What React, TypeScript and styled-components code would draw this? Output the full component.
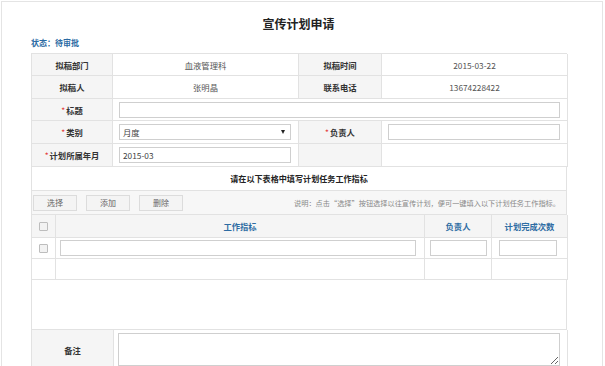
import React from 'react';
import styled, { createGlobalStyle, css } from 'styled-components';

const GlobalStyle = createGlobalStyle`
  html, body {
    margin: 0;
    padding: 0;
    background: #ffffff;
    overflow: hidden;
  }
  body {
    font-family: "Noto Sans CJK SC", "Noto Sans", sans-serif;
    color: #333333;
  }
`;

const Frame = styled.div`
  margin: 1px 1px 0 1px;
  width: 602px;
  height: 420px;
  border: 1px solid #e4e4e4;
  border-bottom: none;
  box-sizing: border-box;
  padding: 0 36px 0 29px;
`;

const Title = styled.h1`
  margin: 0;
  padding-top: 14px;
  height: 30px;
  box-sizing: border-box;
  text-align: center;
  font-size: 12px;
  line-height: 15px;
  font-weight: 700;
  color: #222222;
`;

const Status = styled.div`
  height: 21px;
  font-size: 8px;
  line-height: 21px;
  font-weight: 700;
  color: #2a6aa3;
`;

const Table = styled.div`
  width: 536px;
  border-top: 1px solid #e2e2e2;
  border-left: 1px solid #e2e2e2;
  box-sizing: border-box;
`;

const MAIN_COLS = '81px 186px 83px 186px';
const TASK_COLS = '24px 369px 67px 76px';

const Row = styled.div<{ $cols?: string; $h: number; $bg?: string }>`
  display: grid;
  grid-template-columns: ${(p) => p.$cols || '1fr'};
  height: ${(p) => p.$h}px;
  background: ${(p) => p.$bg || '#ffffff'};
`;

const Cell = styled.div<{ $label?: boolean; $align?: 'left' | 'center' | 'right' }>`
  display: flex;
  align-items: center;
  justify-content: ${(p) => (p.$align === 'left' ? 'flex-start' : p.$align === 'right' ? 'flex-end' : 'center')};
  border-right: 1px solid #e2e2e2;
  border-bottom: 1px solid #e2e2e2;
  box-sizing: border-box;
  font-size: 8.3px;
  min-width: 0;
  ${(p) =>
    p.$label
      ? css`
          background: #f5f5f5;
          font-weight: 700;
          color: #333333;
        `
      : css`
          color: #555555;
        `}
`;

const FieldCell = styled(Cell)`
  justify-content: flex-start;
  padding: 0 7px 0 6px;
`;

const Star = styled.span`
  color: #e33b3b;
  font-weight: 400;
  margin-right: 1px;
`;

const TextInput = styled.input`
  width: 100%;
  height: 16px;
  box-sizing: border-box;
  border: 1px solid #cfcfcf;
  padding: 0 3px;
  font-family: "Noto Sans CJK SC", "Noto Sans", sans-serif;
  font-size: 8.3px;
  color: #444444;
  outline: none;
  background: #ffffff;
`;

const SelectBox = styled.div`
  width: 100%;
  height: 16px;
  box-sizing: border-box;
  border: 1px solid #cfcfcf;
  display: flex;
  align-items: center;
  justify-content: space-between;
  padding: 0 5px 0 3px;
  font-size: 8.3px;
  color: #444444;
`;

const Caret = styled.span`
  width: 0;
  height: 0;
  border-left: 2px solid transparent;
  border-right: 2px solid transparent;
  border-top: 4px solid #222222;
`;

const Instruction = styled(Cell)`
  font-weight: 700;
  color: #222222;
  font-size: 8.1px;
`;

const ToolRow = styled(Cell)`
  justify-content: space-between;
  padding: 0 6px 0 1px;
  background: #f7f7f7;
`;

const Buttons = styled.div`
  display: flex;
  gap: 9px;
`;

const Button = styled.button`
  width: 44px;
  height: 16px;
  border: 1px solid #dcdcdc;
  background: #f4f4f4;
  color: #666666;
  font-family: "Noto Sans CJK SC", "Noto Sans", sans-serif;
  font-size: 8px;
  padding: 0;
  cursor: pointer;
`;

const Note = styled.span`
  font-size: 7.2px;
  color: #888888;
  white-space: nowrap;
`;

const HeadCell = styled(Cell)`
  background: #f5f5f5;
  color: #2d6ca3;
  font-weight: 700;
`;

const Check = styled.span`
  width: 7px;
  height: 7px;
  border: 1px solid #bdbdbd;
  border-radius: 1px;
  background: #f2f2f2;
`;

const TaskField = styled(Cell)<{ $pl: number; $pr: number }>`
  padding: 0 ${(p) => p.$pr}px 0 ${(p) => p.$pl}px;
`;

const Blank = styled.div`
  height: 49px;
  border-right: 1px solid #e2e2e2;
  border-bottom: 1px solid #e2e2e2;
`;

const NoteArea = styled.textarea`
  width: 100%;
  height: 33px;
  box-sizing: border-box;
  border: 1px solid #cfcfcf;
  resize: both;
  outline: none;
  font-family: "Noto Sans CJK SC", "Noto Sans", sans-serif;
  font-size: 8.3px;
`;

const RemarkCell = styled(FieldCell)`
  padding-left: 4px;
`;

const App: React.FC = () => {
  return (
    <>
      <GlobalStyle />
      <Frame>
        <Title>宣传计划申请</Title>
        <Status>状态：待审批</Status>
        <Table>
          <Row $cols={MAIN_COLS} $h={22}>
            <Cell $label>拟稿部门</Cell>
            <Cell>血液管理科</Cell>
            <Cell $label>拟稿时间</Cell>
            <Cell>2015-03-22</Cell>
          </Row>
          <Row $cols={MAIN_COLS} $h={23}>
            <Cell $label>拟稿人</Cell>
            <Cell>张明晶</Cell>
            <Cell $label>联系电话</Cell>
            <Cell>13674228422</Cell>
          </Row>
          <Row $cols="81px 455px" $h={22}>
            <Cell $label>
              <Star>*</Star>标题
            </Cell>
            <FieldCell>
              <TextInput defaultValue="" />
            </FieldCell>
          </Row>
          <Row $cols={MAIN_COLS} $h={23}>
            <Cell $label>
              <Star>*</Star>类别
            </Cell>
            <FieldCell>
              <SelectBox>
                <span>月度</span>
                <Caret />
              </SelectBox>
            </FieldCell>
            <Cell $label>
              <Star>*</Star>负责人
            </Cell>
            <FieldCell>
              <TextInput defaultValue="" />
            </FieldCell>
          </Row>
          <Row $cols={MAIN_COLS} $h={23}>
            <Cell $label>
              <Star>*</Star>计划所属年月
            </Cell>
            <FieldCell>
              <TextInput defaultValue="2015-03" />
            </FieldCell>
            <Cell $label />
            <Cell />
          </Row>
          <Row $h={24}>
            <Instruction>请在以下表格中填写计划任务工作指标</Instruction>
          </Row>
          <Row $h={24}>
            <ToolRow>
              <Buttons>
                <Button>选择</Button>
                <Button>添加</Button>
                <Button>删除</Button>
              </Buttons>
              <Note>说明：点击“选择”按钮选择以往宣传计划，便可一键填入以下计划任务工作指标。</Note>
            </ToolRow>
          </Row>
          <Row $cols={TASK_COLS} $h={23}>
            <HeadCell>
              <Check />
            </HeadCell>
            <HeadCell>工作指标</HeadCell>
            <HeadCell>负责人</HeadCell>
            <HeadCell>计划完成次数</HeadCell>
          </Row>
          <Row $cols={TASK_COLS} $h={21}>
            <Cell>
              <Check />
            </Cell>
            <TaskField $pl={4} $pr={8}>
              <TextInput />
            </TaskField>
            <TaskField $pl={5} $pr={4}>
              <TextInput />
            </TaskField>
            <TaskField $pl={7} $pr={10}>
              <TextInput />
            </TaskField>
          </Row>
          <Row $cols={TASK_COLS} $h={21}>
            <Cell />
            <Cell />
            <Cell />
            <Cell />
          </Row>
          <Blank />
          <Row $cols="82px 454px" $h={40}>
            <Cell $label>备注</Cell>
            <RemarkCell>
              <NoteArea />
            </RemarkCell>
          </Row>
        </Table>
      </Frame>
    </>
  );
};

export default App;
